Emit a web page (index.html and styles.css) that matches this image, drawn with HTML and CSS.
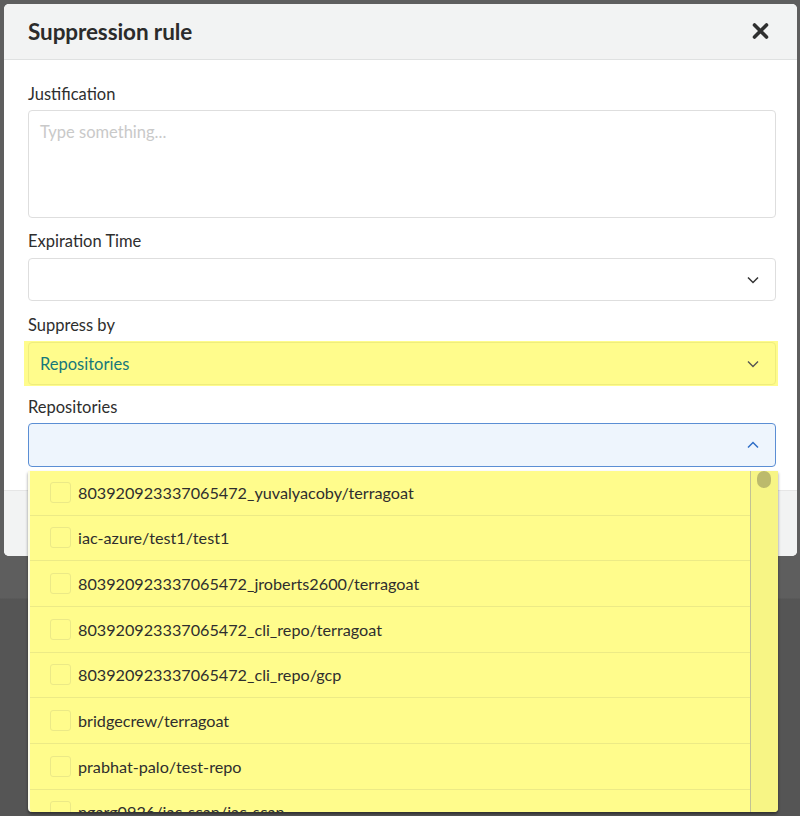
FILE: index.html
```html
<!DOCTYPE html>
<html>
<head>
<meta charset="utf-8">
<link rel="stylesheet" href="styles.css">
</head>
<body>
<div class="backdrop">
  <div class="modal">
    <div class="modal-header">
      <h1 class="title">Suppression rule</h1>
      <button class="close" aria-label="Close">
        <svg width="17" height="16" viewBox="0 0 17 16"><path d="M2.5 2 L14.5 14 M14.5 2 L2.5 14" stroke="#2f2f2f" stroke-width="3.6" stroke-linecap="round"/></svg>
      </button>
    </div>
    <div class="modal-body">
      <label class="label">Justification</label>
      <div class="textarea">Type something...</div>

      <label class="label">Expiration Time</label>
      <div class="select">
        <span class="value"></span>
        <svg class="chev" width="12" height="8" viewBox="0 0 12 8"><path d="M1 1.5 L6 6.5 L11 1.5" fill="none" stroke="#333" stroke-width="1.5"/></svg>
      </div>

      <label class="label">Suppress by</label>
      <div class="hl">
        <div class="select select-hl">
          <span class="value teal">Repositories</span>
          <svg class="chev" width="12" height="8" viewBox="0 0 12 8"><path d="M1 1.5 L6 6.5 L11 1.5" fill="none" stroke="#555" stroke-width="1.4"/></svg>
        </div>
      </div>

      <label class="label">Repositories</label>
      <div class="repo-wrap">
        <div class="select select-open">
          <span class="value"></span>
          <svg class="chev" width="12" height="8" viewBox="0 0 12 8"><path d="M1 6.5 L6 1.5 L11 6.5" fill="none" stroke="#2f6fc7" stroke-width="1.5"/></svg>
        </div>
        <div class="menu">
          <div class="options">
            <div class="opt"><span class="cb"></span><span>803920923337065472_yuvalyacoby/terragoat</span></div>
            <div class="opt"><span class="cb"></span><span>iac-azure/test1/test1</span></div>
            <div class="opt"><span class="cb"></span><span>803920923337065472_jroberts2600/terragoat</span></div>
            <div class="opt"><span class="cb"></span><span>803920923337065472_cli_repo/terragoat</span></div>
            <div class="opt"><span class="cb"></span><span>803920923337065472_cli_repo/gcp</span></div>
            <div class="opt"><span class="cb"></span><span>bridgecrew/terragoat</span></div>
            <div class="opt"><span class="cb"></span><span>prabhat-palo/test-repo</span></div>
            <div class="opt"><span class="cb"></span><span>ngarg0926/iac-scan/iac-scan</span></div>
          </div>
          <div class="scrollbar"><span class="thumb"></span></div>
        </div>
      </div>
    </div>
    <div class="modal-footer"></div>
  </div>
</div>
</body>
</html>
```

FILE: styles.css
```css
* { box-sizing: border-box; }
html, body {
  margin: 0;
  padding: 0;
  width: 800px;
  height: 816px;
  overflow: hidden;
}
body {
  font-family: Lato, "Open Sans", sans-serif;
  color: #2e2e2e;
  background: linear-gradient(#5e5e5e 0, #5e5e5e 598px, #555 599px, #555 100%);
}
.backdrop {
  padding: 4px 3px 0 4px;
}
.modal {
  width: 793px;
  background: #fff;
  border-radius: 5px;
  display: flex;
  flex-direction: column;
}
.modal-header {
  height: 56px;
  background: #f2f3f3;
  border-bottom: 1px solid #dfe1e1;
  border-radius: 5px 5px 0 0;
  display: flex;
  align-items: center;
  justify-content: space-between;
  padding: 0 28px 0 24px;
}
.title {
  margin: 0;
  font-size: 22.5px;
  font-weight: 700;
  color: #2b2b2b;
  letter-spacing: -0.1px;
  padding-bottom: 1px;
}
.close {
  border: 0;
  background: transparent;
  padding: 0;
  display: flex;
  margin-bottom: 1px;
}
.modal-body {
  padding: 24px 21px 23px 24px;
  display: flex;
  flex-direction: column;
}
.label {
  font-size: 16.5px;
  line-height: 20px;
  color: #2e2e2e;
  margin-bottom: 6px;
}
.textarea {
  height: 108px;
  border: 1px solid #dedede;
  border-radius: 4px;
  padding: 11px 11px;
  font-size: 16.5px;
  color: #c9c9c9;
  margin-bottom: 13px;
}
.select {
  height: 43px;
  border: 1px solid #dedede;
  border-radius: 4px;
  display: flex;
  align-items: center;
  justify-content: space-between;
  padding: 0 16px 0 11px;
  font-size: 16.5px;
}
.modal-body > .select { margin-bottom: 14px; margin-top: 1px; }
.hl {
  background: #fffc8c;
  margin: 0 -2px 11px -4px;
  padding: 1px 2px 1px 4px;
}
.select-hl {
  border-color: #efed7e;
  background: #fffc8c;
}
.teal { color: #17787a; }
.select-open {
  background: #eef5fd;
  border-color: #5b8ed4;
  height: 44px;
}
.repo-wrap {
  position: relative;
}
.menu {
  position: absolute;
  left: 0;
  top: 48px;
  width: 750px;
  height: 341px;
  background: #fffc8c;
  border-left: 2px solid #fbfbe6;
  box-shadow: 0 2px 3px rgba(0,0,0,0.45);
  border-radius: 0 0 4px 4px;
  display: flex;
  overflow: hidden;
  z-index: 2;
}
.options {
  flex: 1;
  display: flex;
  flex-direction: column;
  margin-top: -1px;
}
.opt {
  height: 45.67px;
  flex: none;
  border-bottom: 1px solid #ecea86;
  display: flex;
  align-items: center;
  padding-left: 20px;
  font-size: 16.2px;
  color: #2e2e2e;
}
.cb {
  width: 21px;
  height: 21px;
  border: 1px solid #ebe987;
  border-radius: 3px;
  margin-right: 7px;
  flex: none;
}
.scrollbar {
  width: 28px;
  background: #f7f585;
  border-left: 1px solid #c2c293;
  position: relative;
}
.thumb {
  position: absolute;
  left: 6px;
  top: 0px;
  width: 14px;
  height: 17px;
  border-radius: 7px;
  background: #bcba6c;
}
.modal-footer {
  height: 66px;
  background: #f2f3f3;
  border-top: 1px solid #e6e6e6;
  border-radius: 0 0 5px 5px;
}
```
